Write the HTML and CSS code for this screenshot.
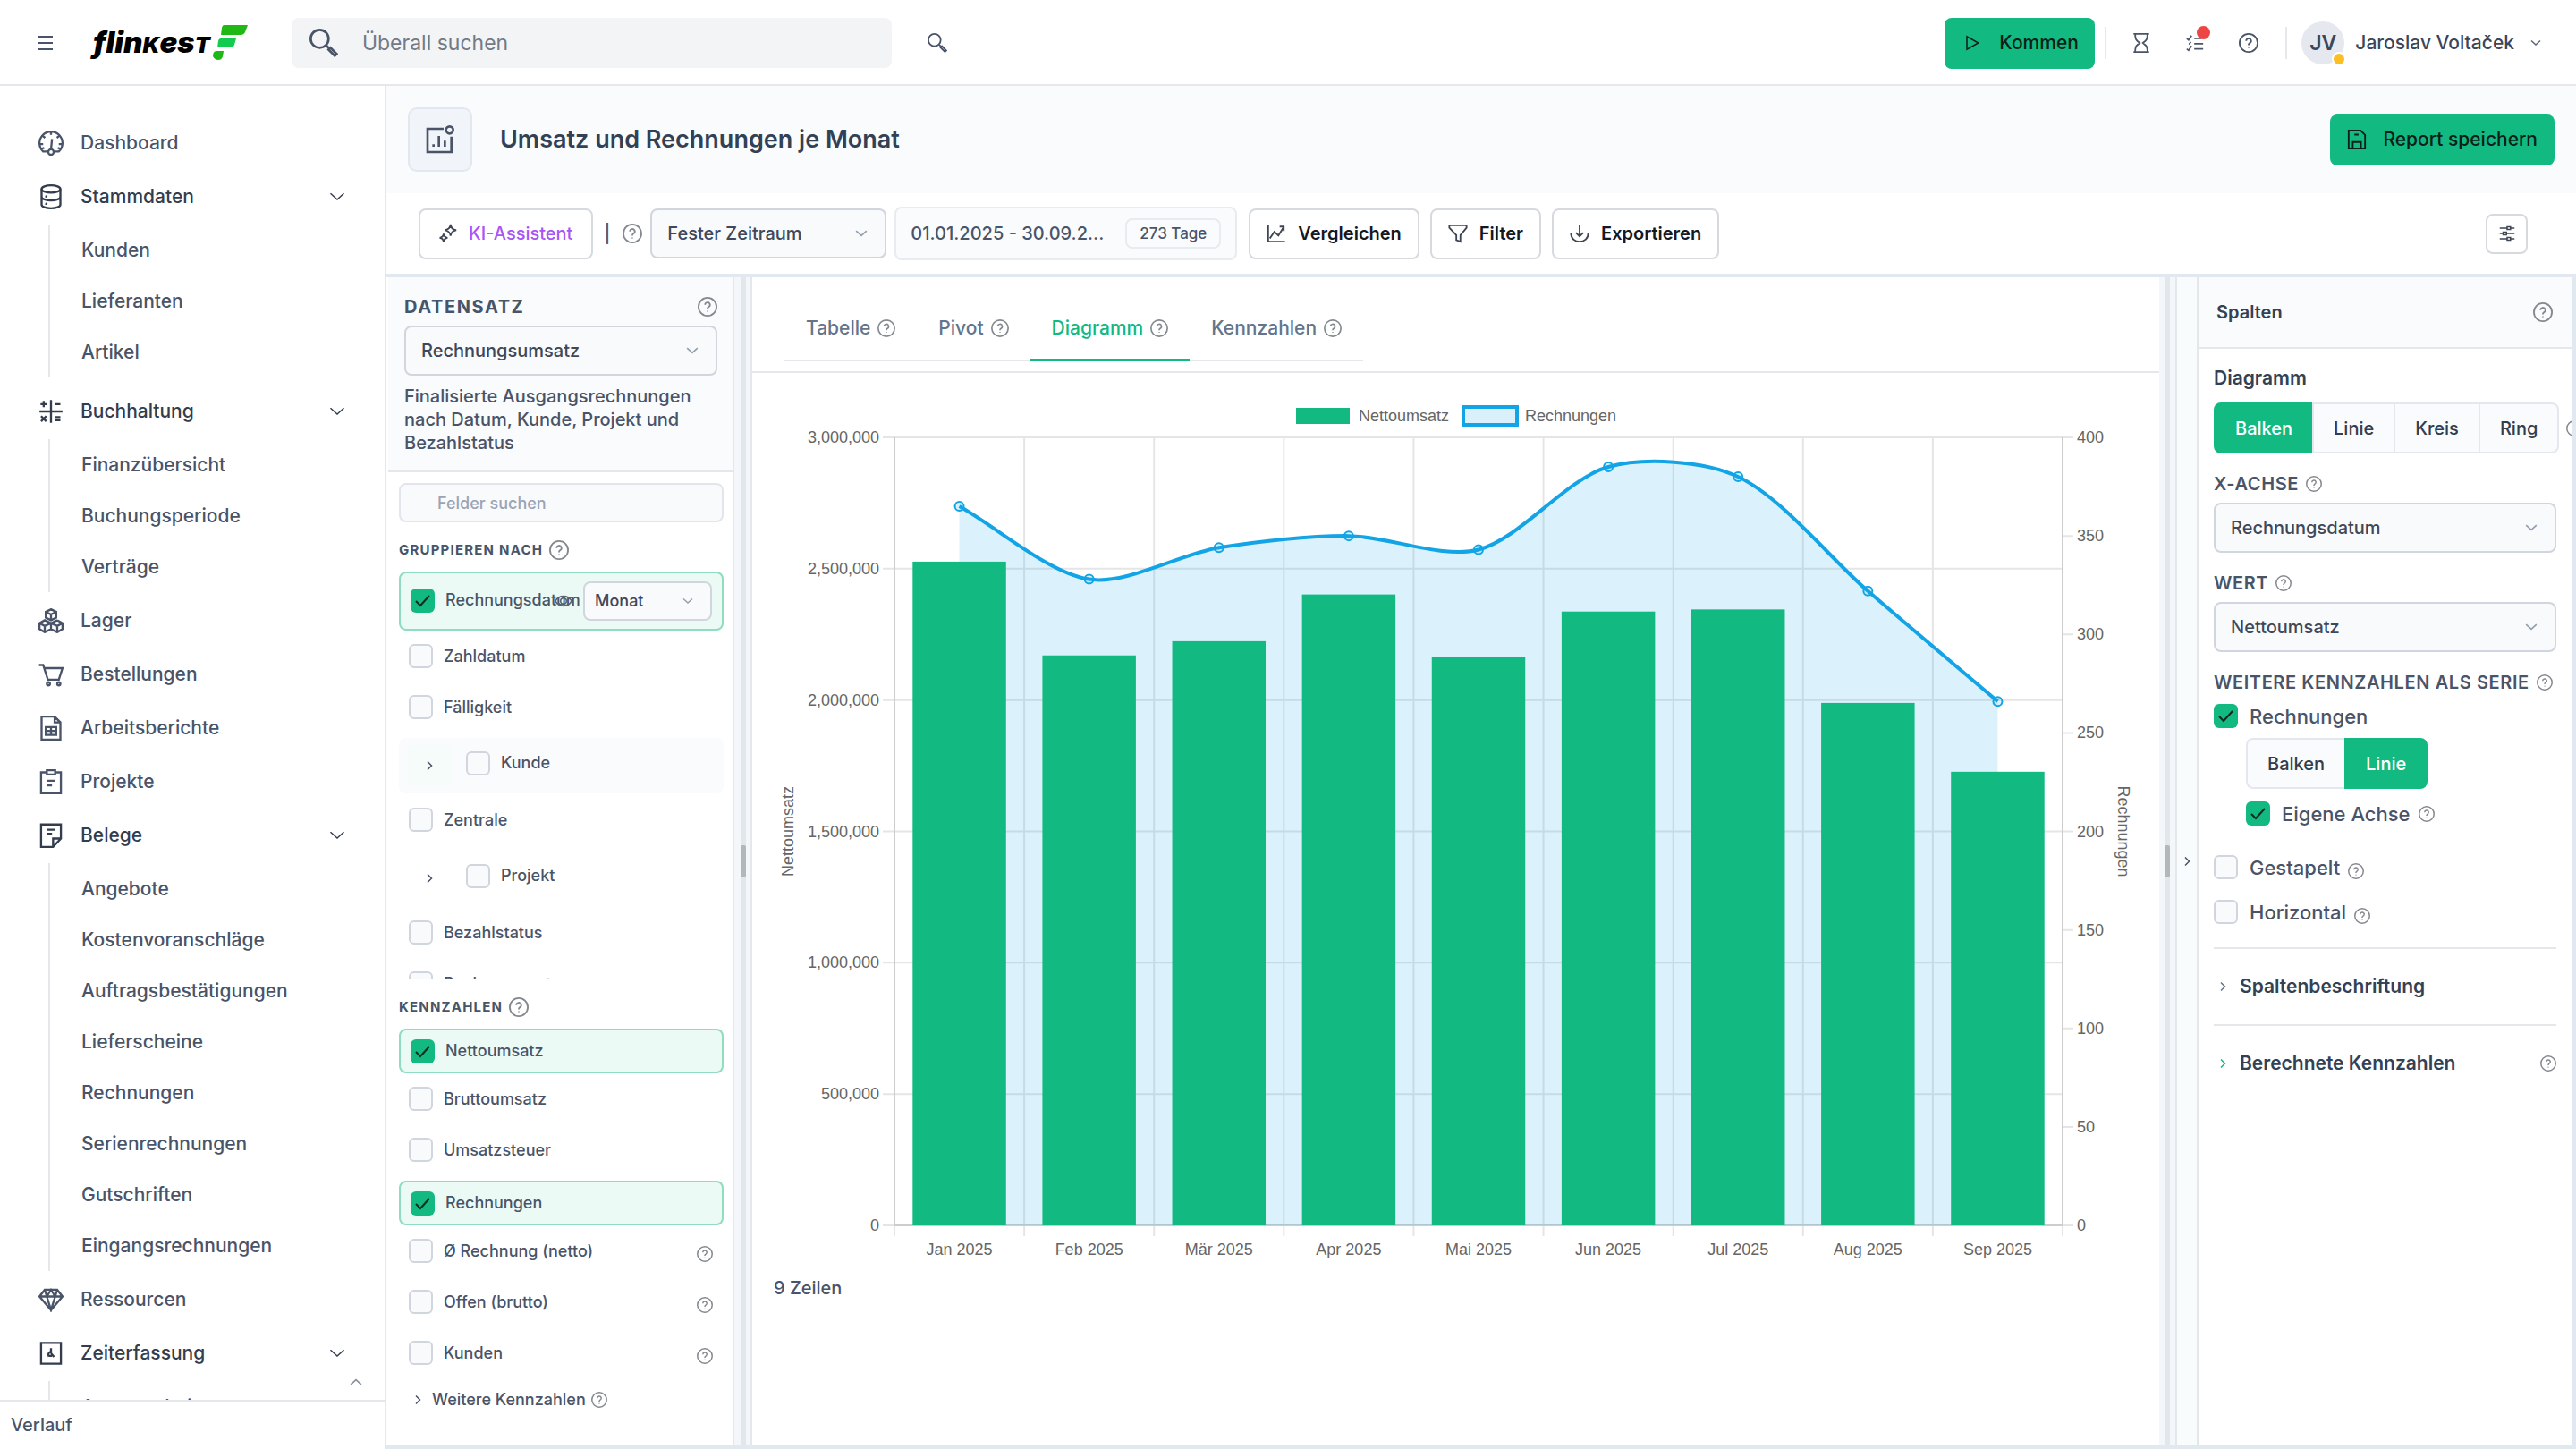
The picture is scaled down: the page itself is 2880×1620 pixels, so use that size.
FILE: index.html
```html
<!DOCTYPE html>
<html lang="de">
<head>
<meta charset="utf-8">
<meta name="viewport" content="width=device-width, initial-scale=1">
<title>Umsatz und Rechnungen je Monat – flinkest</title>
<link rel="stylesheet" href="styles.css">
</head>
<body>
<svg class="sprite" aria-hidden="true">
  <symbol id="help" viewBox="0 0 24 24"><circle cx="12" cy="12" r="11"/><path d="M9 9.6a3 3 0 1 1 4.4 2.6c-.9.5-1.4 1-1.4 2v.5M12 17v1"/></symbol>
  <symbol id="down" viewBox="0 0 24 24"><path d="M2 7l10 9 10-9"/></symbol>
  <symbol id="right" viewBox="0 0 24 24"><path d="M8 3l9 9-9 9"/></symbol>
  <symbol id="search" viewBox="0 0 24 24"><circle cx="8.5" cy="8.5" r="7.5"/><path d="M14 14l2.500 2.500M16 17.600l1.600-1.600 5.200 5.200-1.600 1.600z"/></symbol>
  <symbol id="gauge" viewBox="0 0 24 24"><path d="M9.500 20H4.500A11 11 0 1 1 19.500 20h-5M12 1v3M4.300 5l2 2M19.700 5l-2 2M1.500 13h3M22.500 13h-3M3 17.500l2.500-1M21 17.500l-2.500-1M13 8l-1 10"/><circle cx="12" cy="20.500" r="2.600"/></symbol>
  <symbol id="database" viewBox="0 0 24 24"><ellipse cx="12" cy="4.500" rx="9" ry="3.500"/><path d="M3 4.500v15c0 2 4 3.500 9 3.500s9-1.500 9-3.500v-15M3 12c0 2 4 3.500 9 3.500s9-1.500 9-3.500M6.500 11.500l2 .5M6.500 18.500l2 .5"/></symbol>
  <symbol id="math" viewBox="0 0 24 24"><path d="M12 1v22M1 12h22M2 5h6M5 2v6M16 5h5M2.500 16.500l5 5M7.500 16.500l-5 5M16 17.500h5M16 20.500h5"/></symbol>
  <symbol id="boxes" viewBox="0 0 24 24"><path d="M12 1l5 2.500v5.500l-5 2.500-5-2.500V3.500zM7 3.500l5 2.500 5-2.500M12 6v5.500M6 11.500l6 2.800v5.700l-6 3-5-3v-5.700zM1 14.300l5 2.700 6-2.700 6 2.700 5-2.700M6 17v6M18 17v6M18 11.500l5 2.800v5.700l-5 3-6-3M12 14.300l6-2.800"/></symbol>
  <symbol id="cart" viewBox="0 0 24 24"><path d="M.5 3h4l4.500 14h10.500L23 6H5.500"/><circle cx="9.500" cy="21" r="1.500"/><circle cx="19.500" cy="21" r="1.500"/></symbol>
  <symbol id="sheet" viewBox="0 0 24 24"><path d="M3 1h12.500L21 6.500V23H3zM15.500 1v5.500H21M7 11h10v7.500H7zM7 14.700h10M12 11v7.500"/></symbol>
  <symbol id="clipboard" viewBox="0 0 24 24"><path d="M8 3H2.500v20h19V3H16M8 1h8v4H8zM8 11h8M8 15.500h5"/></symbol>
  <symbol id="note" viewBox="0 0 24 24"><path d="M2.500 1.500h19V15l-7.500 8H2.500zM21.500 15H14v8M8 6.500h8M8 10.500h5"/></symbol>
  <symbol id="gem" viewBox="0 0 24 24"><path d="M6 2.500h12l5 6.500-11 13L1 9zM1 9h22M6 2.500L8 9l4 13 4-13 2-6.500M8 9l4-6.500L16 9"/></symbol>
  <symbol id="timer" viewBox="0 0 24 24"><path d="M2.500 2h19v20h-19zM12 7v5M12 12l3 3.500M10 15a3 3 0 0 1 1.500-4.500M10 14.500h3"/></symbol>
  <symbol id="sparkles" viewBox="0 0 24 24"><path d="M15 1c.6 4.500 2.500 6.500 7 7-4.500.6-6.500 2.500-7 7-.6-4.500-2.500-6.500-7-7 4.500-.6 6.500-2.500 7-7zM6.500 12.500c.4 3 1.800 4.400 4.800 4.800-3 .4-4.400 1.800-4.800 4.800-.4-3-1.800-4.400-4.800-4.800 3-.4 4.400-1.800 4.800-4.800z"/></symbol>
  <symbol id="linechart" viewBox="0 0 24 24"><path d="M2 1.500V22h20.500M4 18l5.500-8 5 4.500L21 4M21 9V3.500h-5"/></symbol>
  <symbol id="funnel" viewBox="0 0 24 24"><path d="M1.500 2h21v3L15 14v8l-5-2v-6L1.500 5z"/></symbol>
  <symbol id="export" viewBox="0 0 24 24"><path d="M12 1.500V15M7.500 11l4.500 4.500 4.500-4.500M1.500 12c0 6 4.500 10 10.500 10s10.500-4 10.500-10"/></symbol>
  <symbol id="sliders" viewBox="0 0 24 24"><path d="M1 4h11M17 4h6M1 12h5M11 12h12M1 20h11M17 20h6M12 2h5v4h-5zM6 10h5v4H6zM12 18h5v4h-5z"/></symbol>
  <symbol id="play" viewBox="0 0 24 24"><path d="M4 2.500v19L21 12z"/></symbol>
  <symbol id="save" viewBox="0 0 24 24"><path d="M2 1h14.500L22 6.500V23H2zM7 23v-8h10v8M9 6h5"/></symbol>
  <symbol id="hourglass" viewBox="0 0 24 24"><path d="M2.500 1h19M2.500 23h19M4.500 1c0 7 1.500 8 5.500 11-4 3-5.500 4-5.500 11M19.500 1c0 7-1.500 8-5.500 11 4 3 5.500 4 5.500 11"/></symbol>
  <symbol id="tasks" viewBox="0 0 24 24"><path d="M1 6l2.500 2L7.500 2M1 20l2.500 2 4-6M11 6h10M11 13h12M11 20h12M4 14l2.500-3.500"/></symbol>
  <symbol id="report" viewBox="0 0 24 24"><path d="M15 3H1.500v19.500h20V9.500M6.500 18v-2M11 18V9M16 18v-5"/><circle cx="20" cy="4" r="3"/></symbol>
  <symbol id="eye" viewBox="0 0 24 24"><path d="M1 12c5-8.500 17-8.500 22 0-5 8.500-17 8.500-22 0z"/><circle cx="12" cy="12" r="4"/></symbol>
</svg>

<header class="topbar">
  <button class="plain menu" aria-label="Menü"><svg viewBox="0 0 16 16"><path d="M0 1h16M0 8h16M0 15h16"/></svg></button>
  <a class="logo" href="#" aria-label="flinkest"><span>flin<b>k</b>es<b>t</b></span>
    <svg viewBox="0 0 40 40" aria-hidden="true"><path fill="#20b814" d="M13 0h26l-3 8q-1.500 3-5 3H9l1-8q.5-3 3-3z"/><path fill="#13cb4f" d="M9 15h17l-2 7q-1 3-5 3H5l1-7q.5-3 3-3z"/><path fill="#20b814" d="M4 29h8l-1 6q-1 4-5 4t-6-4q0-6 4-6z"/></svg></a>
  <label class="globalsearch"><svg class="i i32"><use href="#search"/></svg><input type="text" placeholder="Überall suchen" aria-label="Überall suchen"></label>
  <button class="plain" aria-label="Suchen"><svg class="i i22"><use href="#search"/></svg></button>
  <div class="topright">
    <button class="btn green kommen"><svg class="i i18"><use href="#play"/></svg>Kommen</button>
    <span class="vr"></span>
    <button class="plain" aria-label="Zeit"><svg class="i i22"><use href="#hourglass"/></svg></button>
    <button class="plain tasks" aria-label="Aufgaben"><svg class="i i20"><use href="#tasks"/></svg><span class="dot"></span></button>
    <button class="plain" aria-label="Hilfe"><svg class="i i22"><use href="#help"/></svg></button>
    <span class="vr"></span>
    <button class="plain user"><span class="avatar">JV<span class="status"></span></span>Jaroslav Voltaček<svg class="i i12"><use href="#down"/></svg></button>
  </div>
</header>

<div class="app">
  <aside class="sidebar">
    <nav class="nav">
      <a href="#"><svg class="i i28"><use href="#gauge"/></svg>Dashboard</a>
      <a class="parent" href="#"><svg class="i i28"><use href="#database"/></svg>Stammdaten<svg class="i i18 chev"><use href="#down"/></svg></a>
      <ul class="spaced"><li><a href="#">Kunden</a></li><li><a href="#">Lieferanten</a></li><li><a href="#">Artikel</a></li></ul>
      <a class="parent" href="#"><svg class="i i28"><use href="#math"/></svg>Buchhaltung<svg class="i i18 chev"><use href="#down"/></svg></a>
      <ul><li><a href="#">Finanzübersicht</a></li><li><a href="#">Buchungsperiode</a></li><li><a href="#">Verträge</a></li></ul>
      <a href="#"><svg class="i i28"><use href="#boxes"/></svg>Lager</a>
      <a href="#"><svg class="i i28"><use href="#cart"/></svg>Bestellungen</a>
      <a href="#"><svg class="i i28"><use href="#sheet"/></svg>Arbeitsberichte</a>
      <a href="#"><svg class="i i28"><use href="#clipboard"/></svg>Projekte</a>
      <a class="parent" href="#"><svg class="i i28"><use href="#note"/></svg>Belege<svg class="i i18 chev"><use href="#down"/></svg></a>
      <ul><li><a href="#">Angebote</a></li><li><a href="#">Kostenvoranschläge</a></li><li><a href="#">Auftragsbestätigungen</a></li><li><a href="#">Lieferscheine</a></li><li><a href="#">Rechnungen</a></li><li><a href="#">Serienrechnungen</a></li><li><a href="#">Gutschriften</a></li><li><a href="#">Eingangsrechnungen</a></li></ul>
      <a href="#"><svg class="i i28"><use href="#gem"/></svg>Ressourcen</a>
      <a class="parent" href="#"><svg class="i i28"><use href="#timer"/></svg>Zeiterfassung<svg class="i i18 chev"><use href="#down"/></svg></a>
      <ul><li><a href="#">Anwesenheiten</a></li></ul>
    </nav>
    <button class="plain totop" aria-label="Nach oben"><svg class="i i14"><use href="#down"/></svg></button>
    <a class="history" href="#">Verlauf</a>
  </aside>

  <main class="content">
    <div class="titlebar">
      <span class="titleicon"><svg class="i i32"><use href="#report"/></svg></span>
      <h1>Umsatz und Rechnungen je Monat</h1>
      <button class="btn green"><svg class="i i22"><use href="#save"/></svg>Report speichern</button>
    </div>

    <div class="toolbar">
      <button class="btn ai"><svg class="i i22"><use href="#sparkles"/></svg>KI-Assistent</button>
      <span class="bar">|</span>
      <svg class="i h i22"><use href="#help"/></svg>
      <span class="select period"><select aria-label="Zeitraum"><option>Fester Zeitraum</option></select><svg class="i i14"><use href="#down"/></svg></span>
      <span class="dates"><input type="text" value="01.01.2025 - 30.09.2..." aria-label="Datum"><span class="pill">273 Tage</span></span>
      <span class="tools">
        <button class="btn"><svg class="i i22"><use href="#linechart"/></svg>Vergleichen</button>
        <button class="btn"><svg class="i i22"><use href="#funnel"/></svg>Filter</button>
        <button class="btn"><svg class="i i22"><use href="#export"/></svg>Exportieren</button>
      </span>
      <button class="btn settings" aria-label="Einstellungen"><svg class="i i18"><use href="#sliders"/></svg></button>
    </div>

    <div class="panels">
      <section class="fields">
        <div class="dataset">
          <div class="headline"><h2>DATENSATZ</h2><svg class="i h i22"><use href="#help"/></svg></div>
          <span class="select"><select aria-label="Datensatz"><option>Rechnungsumsatz</option></select><svg class="i i14"><use href="#down"/></svg></span>
          <p>Finalisierte Ausgangsrechnungen nach Datum, Kunde, Projekt und Bezahlstatus</p>
        </div>
        <div class="fieldbody">
          <input class="fieldsearch" type="text" placeholder="Felder suchen" aria-label="Felder suchen">
          <h3>GRUPPIEREN NACH<svg class="i h i22"><use href="#help"/></svg></h3>
          <div class="grouplist">
            <div class="row on tall"><label><input type="checkbox" checked><span>Rechnungsdatum</span></label><button class="plain eye" aria-label="Anzeigen"><svg class="i i20"><use href="#eye"/></svg></button><span class="select small"><select aria-label="Intervall"><option>Monat</option></select><svg class="i i12"><use href="#down"/></svg></span></div>
            <div class="row"><label><input type="checkbox"><span>Zahldatum</span></label></div>
            <div class="row"><label><input type="checkbox"><span>Fälligkeit</span></label></div>
            <div class="row tree hover"><button class="plain" aria-label="Kunde aufklappen"><svg class="i i12"><use href="#right"/></svg></button><label><input type="checkbox"><span>Kunde</span></label></div>
            <div class="row"><label><input type="checkbox"><span>Zentrale</span></label></div>
            <div class="row tree"><button class="plain" aria-label="Projekt aufklappen"><svg class="i i12"><use href="#right"/></svg></button><label><input type="checkbox"><span>Projekt</span></label></div>
            <div class="row"><label><input type="checkbox"><span>Bezahlstatus</span></label></div>
            <div class="row"><label><input type="checkbox"><span>Rechnungsart</span></label></div>
          </div>
          <h3 class="second">KENNZAHLEN<svg class="i h i22"><use href="#help"/></svg></h3>
          <div class="row on"><label><input type="checkbox" checked><span>Nettoumsatz</span></label></div>
          <div class="row"><label><input type="checkbox"><span>Bruttoumsatz</span></label></div>
          <div class="row"><label><input type="checkbox"><span>Umsatzsteuer</span></label></div>
          <div class="row on again"><label><input type="checkbox" checked><span>Rechnungen</span></label></div>
          <div class="row"><label><input type="checkbox"><span>Ø Rechnung (netto)</span></label><svg class="i h i18"><use href="#help"/></svg></div>
          <div class="row"><label><input type="checkbox"><span>Offen (brutto)</span></label><svg class="i h i18"><use href="#help"/></svg></div>
          <div class="row"><label><input type="checkbox"><span>Kunden</span></label><svg class="i h i18"><use href="#help"/></svg></div>
          <button class="plain more"><svg class="i i12"><use href="#right"/></svg>Weitere Kennzahlen<svg class="i h i18"><use href="#help"/></svg></button>
        </div>
      </section>

      <div class="splitter"><span class="track"><span class="grip"></span></span></div>

      <section class="result">
        <div class="tabsbar">
          <div class="tabs" role="tablist">
            <button role="tab">Tabelle<svg class="i h i20"><use href="#help"/></svg></button>
            <button role="tab">Pivot<svg class="i h i20"><use href="#help"/></svg></button>
            <button role="tab" class="active" aria-selected="true">Diagramm<svg class="i h i20"><use href="#help"/></svg></button>
            <button role="tab">Kennzahlen<svg class="i h i20"><use href="#help"/></svg></button>
          </div>
        </div>
        <div class="chartarea">
          <svg class="chart" id="chart" role="img" aria-label="Nettoumsatz und Rechnungen je Monat"></svg>
          <p class="rows">9 Zeilen</p>
        </div>
      </section>

      <div class="splitter wide"><span class="track"><span class="grip"></span></span></div>
      <button class="plain collapse" aria-label="Einklappen"><svg class="i i12"><use href="#right"/></svg></button>

      <section class="columns">
        <div class="colhead"><h2>Spalten</h2><svg class="i h i22"><use href="#help"/></svg></div>
        <div class="colbody">
          <h3>Diagramm</h3>
          <div class="segline"><div class="seg"><button class="active">Balken</button><button>Linie</button><button>Kreis</button><button>Ring</button></div><svg class="i h i18"><use href="#help"/></svg></div>
          <label class="cap" for="xaxis">X-ACHSE<svg class="i h i18"><use href="#help"/></svg></label>
          <span class="select"><select id="xaxis"><option>Rechnungsdatum</option></select><svg class="i i14"><use href="#down"/></svg></span>
          <label class="cap" for="value">WERT<svg class="i h i18"><use href="#help"/></svg></label>
          <span class="select"><select id="value"><option>Nettoumsatz</option></select><svg class="i i14"><use href="#down"/></svg></span>
          <div class="cap series">WEITERE KENNZAHLEN ALS SERIE<svg class="i h i18"><use href="#help"/></svg></div>
          <label class="check"><input type="checkbox" checked>Rechnungen</label>
          <div class="nested">
            <div class="seg"><button>Balken</button><button class="active">Linie</button></div>
            <label class="check"><input type="checkbox" checked>Eigene Achse<svg class="i h i18"><use href="#help"/></svg></label>
          </div>
          <label class="check option"><input type="checkbox">Gestapelt<svg class="i h i18 low"><use href="#help"/></svg></label>
          <label class="check option"><input type="checkbox">Horizontal<svg class="i h i18 low"><use href="#help"/></svg></label>
          <button class="fold first"><svg class="i i12"><use href="#right"/></svg>Spaltenbeschriftung</button>
          <button class="fold accent"><svg class="i i12"><use href="#right"/></svg>Berechnete Kennzahlen<svg class="i h i18 end"><use href="#help"/></svg></button>
        </div>
      </section>
    </div>
  </main>
</div>
<script src="chart.js"></script>
</body>
</html>
```
FILE: styles.css
```css
* { box-sizing: border-box; }

:root {
  --green: #12b981;
  --ink: #334155;
  --text: #4a5468;
  --line: #e5e7eb;
  --field: #f9fafc;
  --control: #d0d5de;
  --band: #e2e8f0;
}

body {
  margin: 0;
  height: 100vh;
  display: flex;
  flex-direction: column;
  overflow: hidden;
  background: #fff;
  color: var(--text);
  font: 450 20px/26px "Inter", "Liberation Sans", sans-serif;
}

h1, h2, h3, p, ul { margin: 0; padding: 0; }
ul { list-style: none; }
a { color: inherit; text-decoration: none; }
button, input, select { font: inherit; color: inherit; }
button { cursor: pointer; }

.sprite { display: none; }

/* icons */
.i { flex: none; fill: none; stroke: currentColor; stroke-width: 2; }
.h { color: #84898f; }
.i12 { width: 12px; height: 12px; stroke-width: 3; }
.i14 { width: 14px; height: 14px; stroke-width: 3; }
.i18 { width: 18px; height: 18px; }
.i20 { width: 20px; height: 20px; }
.i22 { width: 22px; height: 22px; }
.i28 { width: 28px; height: 28px; }
.i32 { width: 32px; height: 32px; }

/* buttons */
.plain { display: flex; align-items: center; justify-content: center; padding: 0; border: 0; background: none; }
.btn {
  display: flex;
  align-items: center;
  gap: 16px;
  height: 57px;
  padding: 0 20px;
  border: 2px solid #d6d9de;
  border-radius: 8px;
  background: #fff;
  color: #14181f;
  font-weight: 600;
}
.btn .i { color: #3d4552; }
.btn.green { border: 0; background: var(--green); color: #0a1f18; font-size: 21px; font-weight: 500; }
.btn.green .i { color: #0a1f18; }

/* selects */
.select { display: grid; }
.select select {
  grid-area: 1 / 1;
  width: 100%;
  height: 56px;
  padding: 0 17px;
  border: 2px solid var(--control);
  border-radius: 8px;
  background: var(--field);
  color: #3f4858;
  appearance: none;
}
.select .i { grid-area: 1 / 1; align-self: center; justify-self: end; margin-right: 21px; color: #94a0b0; pointer-events: none; }

/* check boxes */
input[type="checkbox"] {
  flex: none;
  width: 27px;
  height: 27px;
  margin: 0;
  border: 2px solid var(--control);
  border-radius: 6px;
  background: var(--field);
  appearance: none;
}
input[type="checkbox"]:checked {
  border: 0;
  background: var(--green) url("data:image/svg+xml,%3Csvg xmlns='http://www.w3.org/2000/svg' viewBox='0 0 27 27' fill='none' stroke='%230b2b21' stroke-width='2'%3E%3Cpath d='M6 14l5 5L21 8'/%3E%3C/svg%3E") center / contain no-repeat;
}

/* top bar */
.topbar {
  flex: none;
  display: flex;
  align-items: center;
  height: 96px;
  padding: 2px 39px 0 43px;
  border-bottom: 2px solid var(--line);
}
.menu svg { width: 16px; height: 16px; fill: none; stroke: #4a5468; stroke-width: 2; }
.logo { display: flex; align-items: center; gap: 3px; margin-left: 45px; color: #000; }
.logo span { font-size: 33px; line-height: 40px; font-weight: 900; font-style: italic; }
.logo b { font-size: 25px; font-weight: 900; text-transform: uppercase; }
.logo svg { width: 40px; height: 40px; }
.globalsearch {
  display: flex;
  align-items: center;
  gap: 25px;
  width: 671px;
  height: 56px;
  margin: 0 40px 0 48px;
  padding: 0 20px;
  border-radius: 8px;
  background: #f3f4f6;
}
.globalsearch input { flex: 1; border: 0; outline: 0; background: none; font-size: 23px; font-weight: 400; }
.globalsearch input::placeholder { color: #737a86; opacity: 1; }
.topright { display: flex; align-items: center; margin-left: auto; }
.topright > .plain { min-width: 60px; height: 48px; }
.kommen { width: 168px; padding: 0 22px; gap: 21px; }
.vr { width: 2px; height: 36px; margin: 0 9px 0 11px; background: #e6e8ec; }
.tasks { position: relative; }
.tasks .dot { position: absolute; top: 5px; right: 13px; width: 15px; height: 15px; border-radius: 50%; background: #ef4444; }
.user { gap: 12px; font-size: 21px; color: #3c4657; }
.user .i { margin-left: 6px; color: #5b6575; }
.avatar {
  position: relative;
  display: grid;
  place-items: center;
  width: 48px;
  height: 48px;
  border-radius: 50%;
  background: #e5e8ee;
  font-size: 23px;
  font-weight: 600;
}
.status { position: absolute; right: -2px; bottom: -2px; width: 16px; height: 16px; border: 2px solid #fff; border-radius: 50%; background: #fbbf24; }
.topright .vr + .user { margin-left: 7px; }

/* shell */
.app { flex: 1; min-height: 0; display: flex; }
.sidebar { flex: none; position: relative; display: flex; flex-direction: column; width: 432px; border-right: 2px solid var(--line); }
.nav { flex: 1; min-height: 0; overflow: hidden; padding-top: 34px; font-size: 21px; }
.nav a { display: flex; align-items: center; gap: 19px; height: 60px; padding: 0 44px 0 43px; }
.nav .parent { font-weight: 500; color: #333d4e; }
.nav .chev { margin-left: auto; }
.nav ul { margin: 1px 0 2px 54px; border-left: 2px solid var(--line); }
.nav ul.spaced { margin-bottom: 8px; }
.nav ul a { height: 57px; padding: 0 0 0 35px; }
.totop { position: absolute; right: 25px; bottom: 68px; color: #8b93a0; transform: rotate(180deg); }
.history { flex: none; height: 55px; padding: 13px 12px; border-top: 2px solid var(--line); background: #fff; }

.content { flex: 1; min-width: 0; display: flex; flex-direction: column; }
.titlebar { display: flex; align-items: center; height: 120px; padding: 0 24px; background: #f9fbfd; }
.titleicon { display: grid; place-items: center; width: 72px; height: 72px; margin-right: 31px; border: 2px solid #e2e8f0; border-radius: 10px; background: #f1f5f9; }
.titlebar h1 { flex: 1; font-size: 27px; line-height: 36px; font-weight: 600; color: var(--ink); }
.titlebar .btn { gap: 18px; padding: 0 19px; }

.toolbar { display: flex; align-items: center; height: 94px; padding: 0 54px 0 36px; border-bottom: 4px solid var(--band); }
.ai { gap: 12px; padding: 0 21px 0 20px; color: #a855f7; font-weight: 500; }
.bar { margin: 0 14px 0 12px; }
.period { width: 264px; margin: 0 9px; }
.dates { display: flex; align-items: center; gap: 18px; width: 383px; height: 60px; padding: 0 16px; border: 2px solid #e8ebf0; border-radius: 8px; background: #f9fbfd; }
.dates input { flex: 1; min-width: 0; padding: 0; border: 0; outline: 0; background: none; }
.pill { height: 34px; padding: 2px 14px; border: 2px solid #e8ebf0; border-radius: 8px; font-size: 17px; font-weight: 500; }
.tools { display: flex; gap: 12px; margin-left: 13px; }
.tools .btn { gap: 13px; padding: 0 18px; }
.settings { width: 47px; height: 45px; margin-left: auto; padding: 0; justify-content: center; }

.panels { flex: 1; min-height: 0; display: flex; border-bottom: 4px solid var(--band); }

/* field picker */
.fields { flex: none; width: 389px; padding-left: 2px; border-right: 2px solid var(--line); }
.dataset { height: 218px; padding: 18px 17px 0 18px; border-bottom: 2px solid var(--line); background: #f9fbfd; }
.headline { display: flex; align-items: center; justify-content: space-between; height: 30px; margin-bottom: 6px; }
.headline h2 { font-size: 20px; font-weight: 700; letter-spacing: 0.08em; color: #475569; }
.dataset p { margin-top: 10px; }
.fieldbody { padding: 12px 10px 0 12px; }
.fieldsearch { display: block; width: 100%; height: 44px; padding: 0 41px; border: 2px solid #e2e6ec; border-radius: 8px; background: var(--field); font-size: 18px; outline: 0; }
.fieldsearch::placeholder { color: #9aa4b5; opacity: 1; }
.fieldbody h3 { display: flex; align-items: center; gap: 7px; height: 26px; margin: 18px 0 11px; font-size: 15px; font-weight: 700; letter-spacing: 0.08em; color: #475569; }
.grouplist { height: 456px; overflow: hidden; }
.fieldbody h3.second { margin: 18px 0 11px; }
.row { display: flex; align-items: center; height: 57px; padding: 0 12px 0 11px; font-size: 18px; }
.row label { flex: 1; min-width: 0; display: flex; align-items: center; gap: 12px; white-space: nowrap; }
.row label span { min-width: 0; }
.row .h { margin-top: 6px; }
.row.on { height: 50px; padding: 0 11px; border: 2px solid #8fdcc0; border-radius: 8px; background: #ecfaf5; font-weight: 500; }
.row.again { margin-top: 6px; }
.row.tall { height: 66px; }
.row.tall label { padding-bottom: 2px; }
.eye { width: 44px; color: #5b6472; }
.select.small { width: 144px; }
.select.small select { height: 44px; padding: 0 11px; }
.row.tree { height: 62px; margin: 6px 0 1px; padding: 0 10px; }
.row.tree button { width: 48px; height: 46px; margin-right: 17px; border-radius: 6px; }
.row.tree label { padding-bottom: 6px; }
.row.hover { border-radius: 8px; background: #f9fbfd; }
.row.hover button { background: #f5fcfa; }
.more { height: 48px; padding-left: 15px; gap: 10px; font-size: 18px; font-weight: 500; }
.more .h { margin-left: -4px; }

/* splitters */
.splitter { flex: none; display: flex; width: 20px; padding-left: 7px; border-right: 2px solid var(--line); background: #f4f7fa; }
.splitter.wide { padding-left: 6px; }
.track { display: flex; align-items: center; width: 6px; background: #e2e7eb; }
.grip { width: 6px; height: 36px; border-radius: 2px; background: #b2b7ba; }
.collapse { flex: none; width: 22px; background: #f9fcfd; }

/* result */
.result { flex: 1; min-width: 0; }
.tabsbar { display: flex; height: 107px; padding: 22px 36px 0; border-bottom: 2px solid var(--line); }
.tabs { display: flex; height: 72px; border-bottom: 2px solid var(--line); }
.tabs button { display: flex; align-items: center; gap: 8px; height: 72px; padding: 0 24px; border: 0; border-bottom: 3px solid transparent; background: none; font-size: 21px; font-weight: 550; color: #64748b; }
.tabs .active { border-color: var(--green); color: var(--green); }
.chartarea { padding: 23px 25px 0 24px; }
.chart { display: block; width: 100%; height: 972px; font: 18px "Liberation Sans", sans-serif; fill: #666; }
.rows { margin-top: 15px; font-weight: 450; }

/* chart parts */
.grid { stroke: #000; stroke-opacity: 0.1; stroke-width: 2; fill: none; }
.area { fill: #0ea5e9; fill-opacity: 0.15; }
.bars { fill: var(--green); }
.curve { fill: none; stroke: #13a4e6; stroke-width: 4; }
.point { fill: #0ea5e9; fill-opacity: 0.15; stroke: #13a4e6; stroke-width: 2; }
.key { fill: #daf1fc; stroke: #13a4e6; stroke-width: 4; }

/* column settings */
.columns { flex: none; width: 424px; border-left: 2px solid var(--line); border-right: 4px solid var(--band); overflow: hidden; }
.colhead { display: flex; align-items: center; justify-content: space-between; height: 80px; padding: 0 22px 0 20px; border-bottom: 2px solid var(--line); background: #f9fbfd; }
.colhead h2 { font-size: 20px; font-weight: 600; color: var(--ink); }
.colbody { padding: 20px 18px 0 17px; }
.colbody h3 { margin-bottom: 14px; font-size: 21px; font-weight: 600; color: var(--ink); }
.segline { display: flex; align-items: center; gap: 8px; }
.seg { display: flex; width: max-content; height: 57px; }
.seg button { padding: 0 22px; border: 2px solid #e4e8ee; border-right-width: 0; background: #f9fbfd; color: #333d4e; font-weight: 500; }
.seg button:first-child { border-radius: 8px 0 0 8px; }
.seg button:last-child { border-right-width: 2px; border-radius: 0 8px 8px 0; }
.seg .active { border-color: var(--green); background: var(--green); color: #fff; }
.cap { display: flex; align-items: center; gap: 8px; margin: 21px 0 8px; font-weight: 600; letter-spacing: 0.03em; }
.cap.series { margin-bottom: 11px; }
.check { display: flex; align-items: center; gap: 13px; height: 27px; font-size: 22px; }
.check .h { margin-left: -4px; }
.nested { padding: 11px 0 0 36px; }
.nested .check { margin-top: 14px; }
.check.option { margin-top: 23px; }
.nested + .check { margin-top: 33px; }
.check .low { margin-top: 8px; }
.fold { display: flex; align-items: center; gap: 13px; width: 100%; height: 86px; padding: 0 0 0 4px; border: 0; border-top: 2px solid var(--line); background: none; font-size: 21px; font-weight: 600; color: var(--ink); }
.fold.first { margin-top: 26px; }
.fold .i12 { color: #64748b; }
.fold.accent .i12 { color: var(--green); }
.fold .end { margin-left: auto; }
```
FILE: chart.js
```js
const months = ['Jan', 'Feb', 'Mär', 'Apr', 'Mai', 'Jun', 'Jul', 'Aug', 'Sep'];
const revenue = [2527000, 2170000, 2224000, 2402000, 2165000, 2337000, 2345000, 1989000, 1727000];
const invoices = [365, 328, 344, 350, 343, 385, 380, 322, 266];
const MAX_REVENUE = 3000000;
const MAX_INVOICES = 400;
const TENSION = 0.3;

// Bezier path through the points; handle length follows the distance to each neighbour.
function spline(points) {
  const handles = points.map((p, i) => {
    const a = points[i - 1] || p;
    const b = points[i + 1] || p;
    const da = Math.hypot(p.x - a.x, p.y - a.y);
    const db = Math.hypot(b.x - p.x, b.y - p.y);
    const fa = TENSION * da / (da + db);
    const fb = TENSION * db / (da + db);
    return {
      inX: p.x - fa * (b.x - a.x), inY: p.y - fa * (b.y - a.y),
      outX: p.x + fb * (b.x - a.x), outY: p.y + fb * (b.y - a.y)
    };
  });
  return points.map((p, i) => i === 0
    ? `M${p.x} ${p.y}`
    : `C${handles[i - 1].outX} ${handles[i - 1].outY} ${handles[i].inX} ${handles[i].inY} ${p.x} ${p.y}`
  ).join('');
}

function draw() {
  const svg = document.getElementById('chart');
  const width = svg.clientWidth;
  const left = 135, right = width - 83, top = 49, bottom = 930;
  const step = (right - left) / months.length;
  const height = bottom - top;
  const center = i => left + step * (i + 0.5);
  const out = [];

  let grid = '';
  for (let i = 0; i <= 6; i++) {
    const y = bottom - height * i / 6;
    grid += `M${left - 13} ${y}H${right}`;
    out.push(`<text x="${left - 17}" y="${y + 6}" text-anchor="end">${(i * 500000).toLocaleString('en-US')}</text>`);
  }
  for (let i = 0; i <= 8; i++) {
    const y = bottom - height * i / 8;
    grid += `M${right} ${y}h12`;
    out.push(`<text x="${right + 16}" y="${y + 6}">${i * 50}</text>`);
  }
  for (let i = 0; i <= months.length; i++) grid += `M${left + step * i} ${top}V${bottom + 12}`;
  out.push(`<path class="grid" d="${grid}"/>`);
  out.push(`<path class="grid" d="M${left} ${top}V${bottom}H${right}V${top}"/>`);

  const points = invoices.map((v, i) => ({ x: center(i), y: bottom - height * v / MAX_INVOICES }));
  const curve = spline(points);
  out.push(`<path class="area" d="${curve}V${bottom}H${points[0].x}Z"/>`);

  const barWidth = step * 0.72;
  out.push('<g class="bars">' + revenue.map((v, i) => {
    const h = height * v / MAX_REVENUE;
    return `<rect x="${center(i) - barWidth / 2}" y="${bottom - h}" width="${barWidth}" height="${h}"/>`;
  }).join('') + '</g>');

  out.push(`<path class="curve" d="${curve}"/>`);
  points.forEach(p => out.push(`<circle class="point" cx="${p.x}" cy="${p.y}" r="5"/>`));
  months.forEach((m, i) => out.push(`<text x="${center(i)}" y="963" text-anchor="middle">${m} 2025</text>`));

  const middle = (top + bottom) / 2;
  out.push(`<text transform="translate(22 ${middle}) rotate(-90)" text-anchor="middle">Nettoumsatz</text>`);
  out.push(`<text transform="translate(${width - 21} ${middle}) rotate(90)" text-anchor="middle">Rechnungen</text>`);

  const legend = (width - 356) / 2;
  out.push(`<rect class="bars" x="${legend}" y="16" width="60" height="18"/><text x="${legend + 70}" y="31">Nettoumsatz</text>`);
  out.push(`<rect class="key" x="${legend + 187}" y="15" width="60" height="20"/><text x="${legend + 256}" y="31">Rechnungen</text>`);
  svg.innerHTML = out.join('');
}

draw();
addEventListener('resize', draw);
```
